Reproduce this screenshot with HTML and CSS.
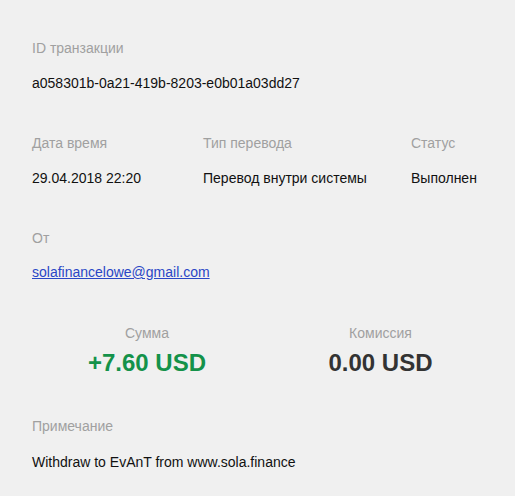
FILE: index.html
```html
<!DOCTYPE html>
<html lang="ru">
<head>
<meta charset="utf-8">
<title>Транзакция</title>
<link rel="stylesheet" href="styles.css">
</head>
<body>
<main class="details">
  <section class="block block-id">
    <div class="label">ID транзакции</div>
    <div class="value">a058301b-0a21-419b-8203-e0b01a03dd27</div>
  </section>

  <section class="block block-row">
    <div class="cell">
      <div class="label">Дата время</div>
      <div class="value">29.04.2018 22:20</div>
    </div>
    <div class="cell">
      <div class="label">Тип перевода</div>
      <div class="value">Перевод внутри системы</div>
    </div>
    <div class="cell">
      <div class="label">Статус</div>
      <div class="value">Выполнен</div>
    </div>
  </section>

  <section class="block block-from">
    <div class="label">От</div>
    <div class="value"><a class="link" href="#">solafinancelowe@gmail.com</a></div>
  </section>

  <section class="block block-amounts">
    <div class="amount-cell">
      <div class="label">Сумма</div>
      <div class="amount amount-plus">+7.60 USD</div>
    </div>
    <div class="amount-cell">
      <div class="label">Комиссия</div>
      <div class="amount amount-fee">0.00 USD</div>
    </div>
  </section>

  <section class="block block-note">
    <div class="label">Примечание</div>
    <div class="value">Withdraw to EvAnT from www.sola.finance</div>
  </section>
</main>
</body>
</html>
```
FILE: styles.css
```css
html, body {
  margin: 0;
  padding: 0;
  background: #f0f0f0;
}
body {
  font-family: "Liberation Sans", Arial, sans-serif;
  font-size: 14px;
  line-height: 16px;
  color: #111;
}
.details {
  padding: 40px 16px 0 32px;
  display: flex;
  flex-direction: column;
}
.label {
  color: #a0a0a0;
}
.value {
  color: #111;
}
.block-id .value { margin-top: 19px; }

.block-row {
  margin-top: 44px;
  display: grid;
  grid-template-columns: 171px 208px auto;
}
.block-row .value { margin-top: 19px; }

.block-from { margin-top: 44px; }
.block-from .value { margin-top: 18px; }
.link {
  color: #2a47c6;
  text-decoration: underline;
}

.block-amounts {
  margin-top: 45px;
  display: grid;
  grid-template-columns: 230px 237px;
  text-align: center;
}
.amount {
  margin-top: 8px;
  font-size: 24px;
  line-height: 28px;
  font-weight: bold;
}
.amount-plus { color: #14924a; }
.amount-fee { color: #333; }

.block-note { margin-top: 41px; }
.block-note .value { margin-top: 20px; }
```
